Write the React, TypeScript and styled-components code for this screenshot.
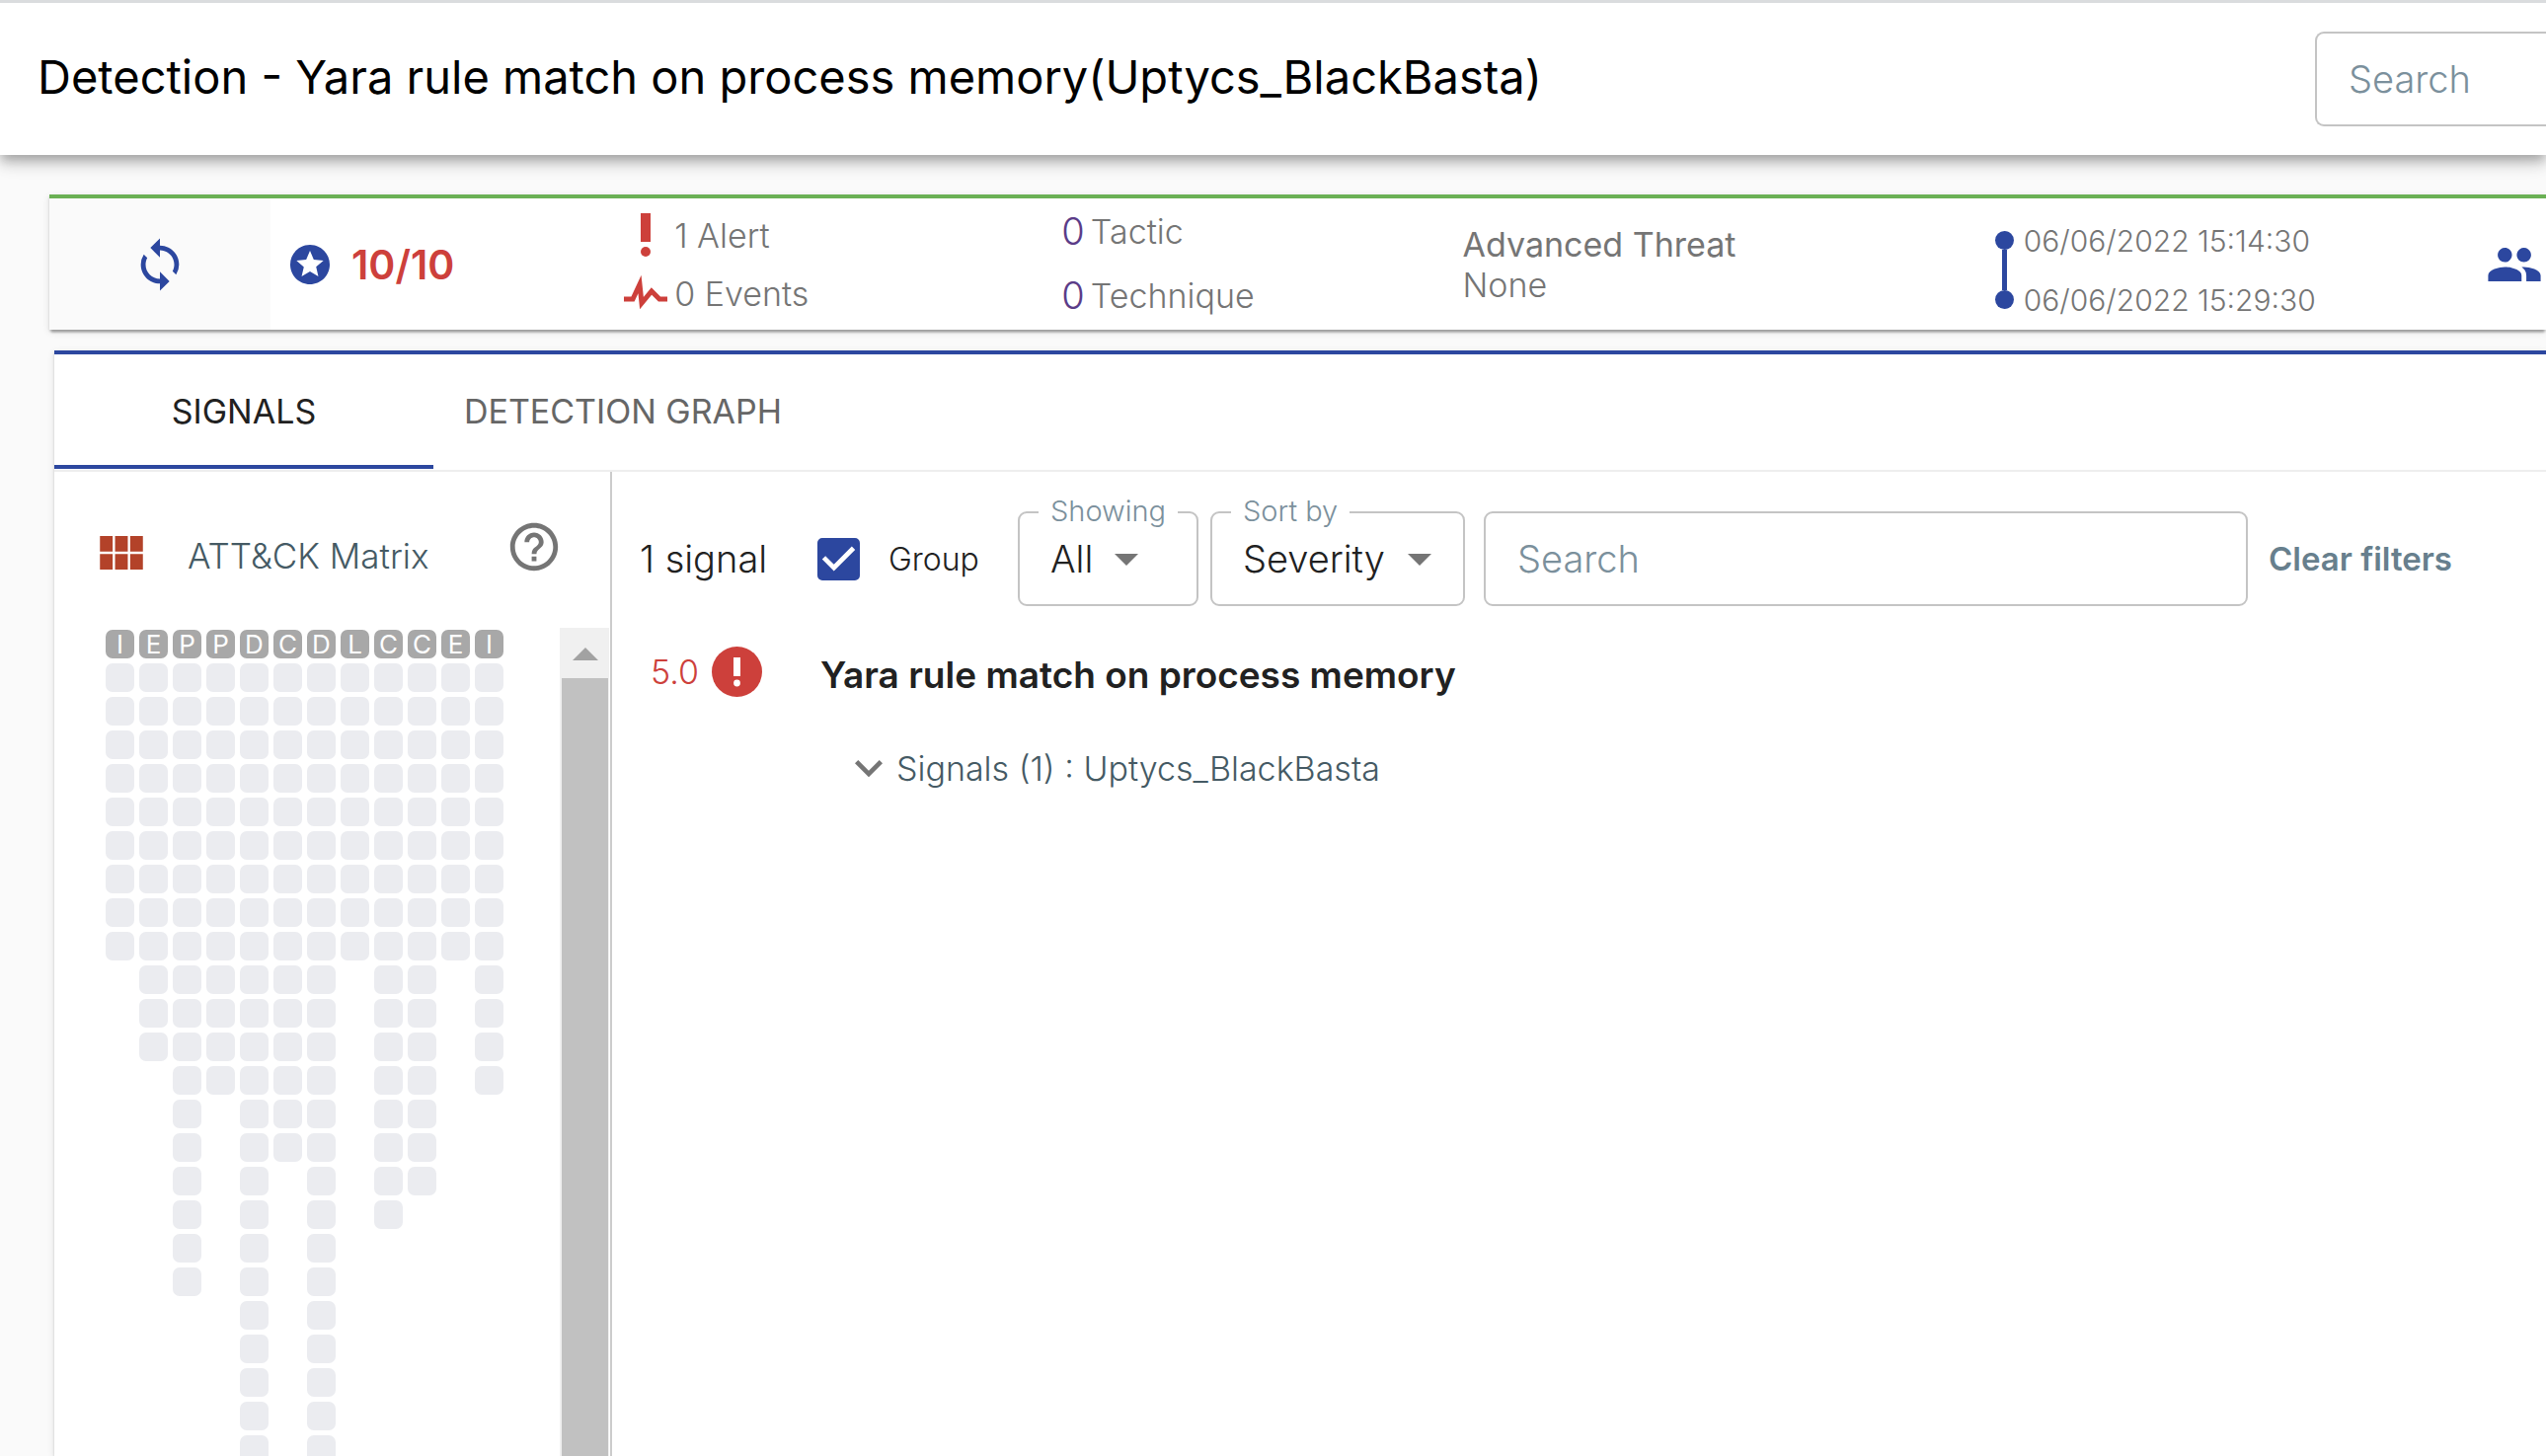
import React, { useState } from "react";
import styled, { createGlobalStyle } from "styled-components";
import {
  MdSync,
  MdStars,
  MdGroup,
  MdViewModule,
  MdHelpOutline,
  MdExpandMore,
} from "react-icons/md";

const color = {
  blue: "#2c479f",
  red: "#cd403b",
  green: "#6ab054",
  purple: "#5b3c88",
  ink: "#212121",
  grey: "#757575",
  slate: "#455a64",
  placeholder: "#7b909c",
  outline: "#c4c4c4",
};

const GlobalStyle = createGlobalStyle`
  *, *::before, *::after { box-sizing: border-box; }
  html, body, #root { height: 100%; }
  body {
    margin: 0;
    background: #fafafa;
    color: ${color.ink};
    font-family: Inter, "Liberation Sans", sans-serif;
    font-size: 34px;
    font-weight: 300;
    overflow: hidden;
  }
  h1, h2, p { margin: 0; }
  button, input, select { font: inherit; color: inherit; }
  svg { display: block; flex: none; }
`;

const Page = styled.div`
  display: flex;
  flex-direction: column;
  height: 100vh;
`;

const Header = styled.header`
  position: relative;
  z-index: 1;
  flex: none;
  display: flex;
  align-items: center;
  justify-content: space-between;
  height: 157px;
  padding-left: 38px;
  border-top: 3px solid #dadcde;
  background: #fff;
  box-shadow: 0 5px 10px -2px rgba(0, 0, 0, 0.2), 0 10px 12px rgba(0, 0, 0, 0.14),
    0 2px 24px rgba(0, 0, 0, 0.12);
`;

const PageTitle = styled.h1`
  padding-bottom: 4px;
  font-size: 47px;
  font-weight: 400;
  line-height: 64px;
  color: #000;
  white-space: nowrap;
`;

const SearchInput = styled.input`
  height: 96px;
  min-width: 0;
  padding: 0 32px;
  border: 2px solid ${color.outline};
  border-radius: 9px;
  background: transparent;
  font-size: 38px;
  outline: none;
  &::placeholder {
    color: ${color.placeholder};
    opacity: 1;
  }
`;

const HeaderSearch = styled(SearchInput)`
  width: 234px;
  border-right: 0;
  border-radius: 9px 0 0 9px;
`;

const FilterSearch = styled(SearchInput)`
  flex: 1;
  margin: 0 21px 0 19px;
`;

const cardShadow =
  "0 5px 2px -2px rgba(0, 0, 0, 0.2), 0 2px 2px rgba(0, 0, 0, 0.14), 0 2px 7px rgba(0, 0, 0, 0.12)";

const Summary = styled.section`
  flex: none;
  display: grid;
  grid-template-columns: 224px 351fr 450fr 406fr 539fr 497fr 61px;
  align-items: center;
  height: 137px;
  margin: 40px 0 0 50px;
  border-top: 4px solid ${color.green};
  background: #fff;
  box-shadow: ${cardShadow};
  color: ${color.grey};
`;

const RefreshButton = styled.button`
  display: flex;
  align-items: center;
  justify-content: center;
  align-self: stretch;
  padding: 0;
  border: 0;
  background: #fafafa;
  color: ${color.blue};
  cursor: pointer;
`;

const Score = styled.div`
  display: flex;
  align-items: center;
  gap: 18px;
  padding-left: 16px;
  color: ${color.red};
  font-size: 41px;
  font-weight: 600;
`;

const StarIcon = styled(MdStars)`
  color: ${color.blue};
`;

const Counts = styled.div`
  display: grid;
  grid-template-columns: 58px auto;
  grid-auto-rows: 59px;
  align-items: center;
  justify-items: center;
  justify-content: start;
`;

const CountText = styled.span`
  justify-self: start;
`;

const Attack = styled.div`
  padding-bottom: 2px;
  line-height: 65px;
`;

const AttackLine = styled.p`
  display: flex;
  gap: 6px;
`;

const AttackNumber = styled.a`
  color: ${color.purple};
  font-size: 38px;
  text-decoration: none;
`;

const Threat = styled.div`
  line-height: 41px;
`;

const ThreatName = styled.p`
  font-weight: 400;
`;

const TimeRange = styled.div`
  display: flex;
  align-items: center;
  gap: 10px;
  padding-top: 12px;
  font-size: 30px;
  line-height: 60px;
`;

const Rail = styled.div`
  display: flex;
  flex-direction: column;
  align-items: center;
  height: 79px;
`;

const RailDot = styled.span`
  width: 19px;
  height: 19px;
  border-radius: 50%;
  background: ${color.blue};
`;

const RailLine = styled.span`
  flex: 1;
  width: 5px;
  background: ${color.blue};
`;

const GroupIcon = styled(MdGroup)`
  color: ${color.blue};
`;

const Detail = styled.section`
  flex: 1;
  min-height: 0;
  display: flex;
  flex-direction: column;
  margin: 21px 0 0 55px;
  border-top: 4px solid ${color.blue};
  background: #fff;
  box-shadow: ${cardShadow};
`;

const TabBar = styled.nav`
  flex: none;
  display: flex;
  padding-bottom: 1px;
  border-bottom: 2px solid #eee;
`;

const Tab = styled.button<{ $active: boolean }>`
  width: 384px;
  height: 116px;
  padding: 0 0 2px;
  border: 0;
  background: transparent;
  box-shadow: ${(p) => (p.$active ? `inset 0 -4px ${color.blue}` : "none")};
  color: ${(p) => (p.$active ? color.ink : "#666")};
  font-size: 34px;
  font-weight: 400;
  white-space: nowrap;
  cursor: pointer;
`;

const Columns = styled.div`
  flex: 1;
  min-height: 0;
  display: flex;
`;

const MatrixPanel = styled.aside`
  flex: none;
  width: 565px;
  display: flex;
  flex-direction: column;
  border-right: 2px solid #ccc;
`;

const MatrixHeader = styled.div`
  flex: none;
  display: flex;
  align-items: flex-end;
  height: 64px;
  margin: 47px 0;
  padding: 0 48px 0 39px;
`;

const MatrixIcon = styled(MdViewModule)`
  color: #b34229;
`;

const MatrixTitle = styled.h2`
  flex: 1;
  padding-left: 38px;
  color: ${color.slate};
  font-size: 35px;
  font-weight: 300;
  line-height: 51px;
`;

const HelpButton = styled.button`
  align-self: flex-start;
  padding: 0;
  border: 0;
  background: transparent;
  color: ${color.grey};
  cursor: pointer;
`;

const MatrixScroll = styled.div`
  flex: 1;
  min-height: 0;
  display: flex;
  justify-content: space-between;
  padding: 0 1px 0 52px;
  overflow: hidden;
`;

const Matrix = styled.div`
  display: flex;
  gap: 5px;
  padding-top: 2px;
`;

const Tactic = styled.div`
  display: flex;
  flex-direction: column;
  gap: 5px;
`;

const TacticLetter = styled.span`
  flex: none;
  width: 29px;
  height: 29px;
  border-radius: 7px;
  background: #a8a8a8;
  color: #fff;
  font-size: 26px;
  font-weight: 400;
  line-height: 29px;
  text-align: center;
`;

const TechniqueCell = styled.span`
  flex: none;
  width: 29px;
  height: 29px;
  border-radius: 7px;
  background: #ebecf0;
`;

const ScrollTrack = styled.div`
  width: 50px;
  display: flex;
  flex-direction: column;
  padding: 0 1px 0 2px;
  background: #f0f0f0;
`;

const ScrollUp = styled.button`
  flex: none;
  display: flex;
  align-items: center;
  justify-content: center;
  height: 51px;
  padding: 2px 0 0;
  border: 0;
  background: transparent;
`;

const ScrollThumb = styled.div`
  flex: 1;
  background: #c1c1c1;
`;

const Results = styled.main`
  flex: 1;
  min-width: 0;
  padding: 40px 95px 0 28px;
`;

const Filters = styled.div`
  display: flex;
  align-items: center;
  height: 96px;
`;

const SignalCount = styled.span`
  flex: none;
  width: 180px;
  font-size: 38px;
  white-space: nowrap;
`;

const GroupToggle = styled.label`
  flex: none;
  display: flex;
  align-items: center;
  gap: 29px;
  width: 203px;
  font-size: 32px;
`;

const CheckFrame = styled.span`
  display: grid;
  place-items: center;
  width: 43px;
  height: 43px;
  > * {
    grid-area: 1 / 1;
  }
`;

const Checkbox = styled.input`
  appearance: none;
  width: 43px;
  height: 43px;
  margin: 0;
  border: 5px solid ${color.blue};
  border-radius: 5px;
  &:checked {
    background: ${color.blue};
  }
  & + svg {
    pointer-events: none;
  }
  &:not(:checked) + svg {
    visibility: hidden;
  }
`;

const SelectBox = styled.div<{ $width: number }>`
  position: relative;
  flex: none;
  width: ${(p) => p.$width}px;
  height: 96px;
  border: 2px solid ${color.outline};
  border-radius: 9px;
  & + & {
    margin-left: 12px;
  }
`;

const SelectLabel = styled.label`
  position: absolute;
  top: -19px;
  left: 19px;
  padding: 0 12px;
  background: #fff;
  color: ${color.placeholder};
  font-size: 29px;
  line-height: 34px;
`;

const Select = styled.select`
  appearance: none;
  width: 100%;
  height: 100%;
  padding: 0 0 0 31px;
  border: 0;
  background: transparent;
  font-size: 38px;
  outline: none;
`;

const SelectArrow = styled.svg<{ $right: number }>`
  position: absolute;
  top: 41px;
  right: ${(p) => p.$right}px;
  pointer-events: none;
`;

const ClearButton = styled.button`
  flex: none;
  padding: 0;
  border: 0;
  background: transparent;
  color: #677f8d;
  font-size: 33px;
  font-weight: 600;
  cursor: pointer;
`;

const Signal = styled.article`
  display: flex;
  align-items: flex-start;
  margin-top: 41px;
`;

const Severity = styled.div`
  flex: none;
  display: flex;
  align-items: center;
  gap: 13px;
  width: 183px;
  height: 51px;
  padding-left: 11px;
  color: ${color.red};
`;

const SignalTitle = styled.h2`
  font-size: 37px;
  font-weight: 600;
  line-height: 58px;
`;

const SignalToggle = styled.button`
  display: flex;
  align-items: center;
  height: 58px;
  margin: 36px 0 0 204px;
  padding: 0;
  border: 0;
  background: transparent;
  color: ${color.slate};
  font-size: 34px;
  cursor: pointer;
`;

const Chevron = styled(MdExpandMore)`
  color: ${color.grey};
`;

const tactics: [string, number][] = [
  ["I", 9],
  ["E", 12],
  ["P", 19],
  ["P", 13],
  ["D", 28],
  ["C", 15],
  ["D", 34],
  ["L", 9],
  ["C", 17],
  ["C", 16],
  ["E", 9],
  ["I", 13],
];

function AlertIcon() {
  return (
    <svg width="10" height="44" viewBox="0 0 10 44" fill={color.red}>
      <rect width="10" height="29" />
      <circle cx="5" cy="39" r="5" />
    </svg>
  );
}

function PulseIcon() {
  return (
    <svg width="44" height="36" viewBox="0 0 44 36">
      <path
        d="M0 24H9L16 9L18 28L28 16L36 24H44"
        fill="none"
        stroke={color.red}
        strokeWidth="5"
        strokeMiterlimit="10"
      />
    </svg>
  );
}

function SeverityIcon() {
  return (
    <svg width="51" height="51" viewBox="0 0 51 51">
      <circle cx="25.5" cy="25.5" r="25.5" fill={color.red} />
      <rect x="22" y="11" width="7" height="19" fill="#fff" />
      <circle cx="25.5" cy="37" r="3.4" fill="#fff" />
    </svg>
  );
}

function CheckMark() {
  return (
    <svg width="43" height="43" viewBox="3 3 18 18" fill="#fff">
      <path d="M10 17l-5-5 1.41-1.41L10 14.17l7.59-7.59L19 8z" />
    </svg>
  );
}

type FilterSelectProps = {
  id: string;
  label: string;
  options: string[];
  width: number;
  arrowRight: number;
};

function FilterSelect({ id, label, options, width, arrowRight }: FilterSelectProps) {
  return (
    <SelectBox $width={width}>
      <SelectLabel htmlFor={id}>{label}</SelectLabel>
      <Select id={id}>
        {options.map((o) => (
          <option key={o}>{o}</option>
        ))}
      </Select>
      <SelectArrow $right={arrowRight} width="24" height="12" viewBox="0 0 24 12">
        <path d="M0 0h24L12 12z" fill={color.grey} />
      </SelectArrow>
    </SelectBox>
  );
}

export default function App() {
  const [tab, setTab] = useState("SIGNALS");
  const [grouped, setGrouped] = useState(true);

  return (
    <Page>
      <GlobalStyle />
      <Header>
        <PageTitle>Detection - Yara rule match on process memory(Uptycs_BlackBasta)</PageTitle>
        <HeaderSearch type="text" placeholder="Search" aria-label="Search detections" />
      </Header>

      <Summary>
        <RefreshButton aria-label="Refresh">
          <MdSync size={58} />
        </RefreshButton>
        <Score>
          <StarIcon size={48} />
          10/10
        </Score>
        <Counts>
          <AlertIcon />
          <CountText>1 Alert</CountText>
          <PulseIcon />
          <CountText>0 Events</CountText>
        </Counts>
        <Attack>
          <AttackLine>
            <AttackNumber href="#tactic">0</AttackNumber>
            Tactic
          </AttackLine>
          <AttackLine>
            <AttackNumber href="#technique">0</AttackNumber>
            Technique
          </AttackLine>
        </Attack>
        <Threat>
          <ThreatName>Advanced Threat</ThreatName>
          <p>None</p>
        </Threat>
        <TimeRange>
          <Rail>
            <RailDot />
            <RailLine />
            <RailDot />
          </Rail>
          <div>
            <p>06/06/2022 15:14:30</p>
            <p>06/06/2022 15:29:30</p>
          </div>
        </TimeRange>
        <GroupIcon size={58} />
      </Summary>

      <Detail>
        <TabBar>
          {["SIGNALS", "DETECTION GRAPH"].map((name) => (
            <Tab key={name} $active={tab === name} onClick={() => setTab(name)}>
              {name}
            </Tab>
          ))}
        </TabBar>
        <Columns>
          <MatrixPanel>
            <MatrixHeader>
              <MatrixIcon size={58} />
              <MatrixTitle>ATT&amp;CK Matrix</MatrixTitle>
              <HelpButton aria-label="Help">
                <MdHelpOutline size={58} />
              </HelpButton>
            </MatrixHeader>
            <MatrixScroll>
              <Matrix>
                {tactics.map(([letter, count], i) => (
                  <Tactic key={i}>
                    <TacticLetter>{letter}</TacticLetter>
                    {Array.from({ length: count }, (_, n) => (
                      <TechniqueCell key={n} />
                    ))}
                  </Tactic>
                ))}
              </Matrix>
              <ScrollTrack>
                <ScrollUp aria-label="Scroll up">
                  <svg width="26" height="13" viewBox="0 0 26 13">
                    <path d="M0 13h26L13 0z" fill="#a2a2a2" />
                  </svg>
                </ScrollUp>
                <ScrollThumb />
              </ScrollTrack>
            </MatrixScroll>
          </MatrixPanel>

          <Results>
            <Filters>
              <SignalCount>1 signal</SignalCount>
              <GroupToggle>
                <CheckFrame>
                  <Checkbox
                    type="checkbox"
                    checked={grouped}
                    onChange={(e) => setGrouped(e.target.checked)}
                  />
                  <CheckMark />
                </CheckFrame>
                Group
              </GroupToggle>
              <FilterSelect id="showing" label="Showing" options={["All"]} width={183} arrowRight={59} />
              <FilterSelect id="sort" label="Sort by" options={["Severity"]} width={258} arrowRight={32} />
              <FilterSearch type="text" placeholder="Search" aria-label="Search signals" />
              <ClearButton>Clear filters</ClearButton>
            </Filters>
            <Signal>
              <Severity>
                5.0
                <SeverityIcon />
              </Severity>
              <SignalTitle>Yara rule match on process memory</SignalTitle>
            </Signal>
            <SignalToggle>
              <Chevron size={56} />
              Signals (1) : Uptycs_BlackBasta
            </SignalToggle>
          </Results>
        </Columns>
      </Detail>
    </Page>
  );
}
